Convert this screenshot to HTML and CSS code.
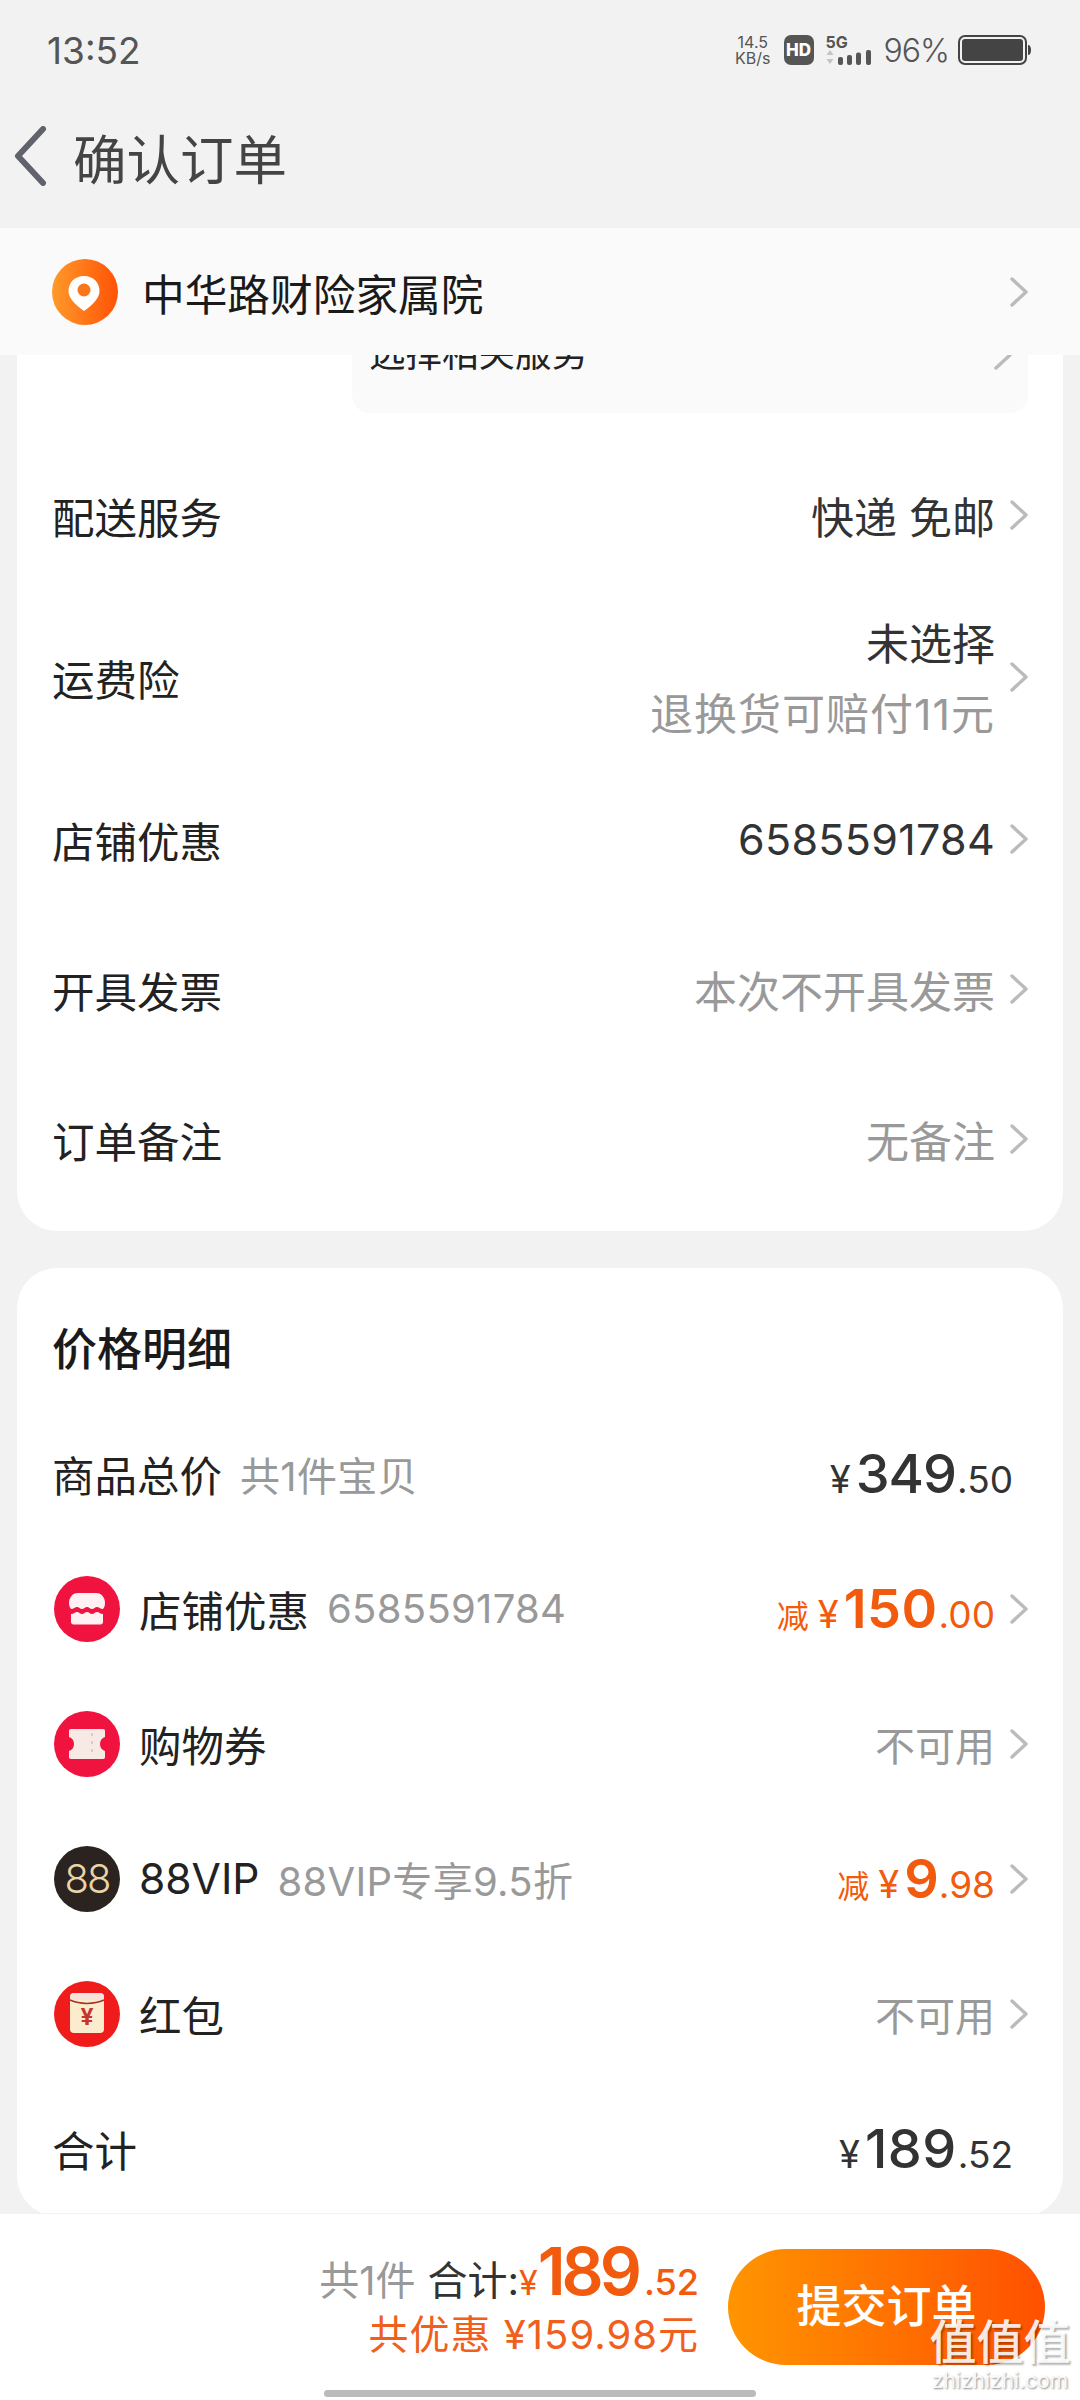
FILE: index.html
```html
<!DOCTYPE html>
<html lang="zh-CN">

<head>
    <meta charset="UTF-8">
    <meta name="viewport" content="width=device-width, initial-scale=1.0">
    <title>确认订单</title>
    <link rel="stylesheet" href="styles.css">
</head>

<body>
    <svg class="defs" width="0" height="0">
        <symbol id="chev" viewBox="0 0 18 30">
            <path d="M2 2l14 13L2 28" fill="none" stroke="#bbb" stroke-width="3.4" stroke-linecap="round" stroke-linejoin="round" />
        </symbol>
    </svg>

    <div class="page">
        <div class="status">
            <span class="time">13:52</span>
            <div class="status-right">
                <div class="speed"><span>14.5</span><span>KB/s</span></div>
                <span class="hd">HD</span>
                <div class="net">
                    <span class="net-label">5G</span>
                    <svg width="47" height="15" viewBox="0 0 47 15">
                        <path d="M4 0l3.500 5h-7zM4 14l3.500-5h-7z" fill="#c4c4c4" />
                        <rect x="12" y="7" width="5" height="8" rx="2" fill="#555" />
                        <rect x="21" y="5" width="5" height="10" rx="2" fill="#555" />
                        <rect x="30" y="2.500" width="5" height="12.500" rx="2" fill="#555" />
                        <rect x="40" y="0" width="5" height="15" rx="2" fill="#555" />
                    </svg>
                </div>
                <span class="pct">96%</span>
                <svg width="73" height="30" viewBox="0 0 73 30">
                    <rect x="1" y="1" width="67" height="28" rx="6" fill="none" stroke="#444" stroke-width="2" />
                    <rect x="4" y="4" width="61" height="22" rx="3" fill="#444" />
                    <path d="M70 10c2 0 3 2 3 5s-1 5-3 5z" fill="#444" />
                </svg>
            </div>
        </div>

        <div class="nav">
            <svg class="back" width="34" height="60" viewBox="0 0 34 60">
                <path d="M30 3L5 30l25 27" fill="none" stroke="#60636b" stroke-width="6" stroke-linecap="round" stroke-linejoin="round" />
            </svg>
            <span class="nav-title">确认订单</span>
        </div>

        <div class="address">
            <svg width="66" height="66" viewBox="0 0 66 66">
                <defs>
                    <linearGradient id="pinBg" x1="0" x2="1" y1="0" y2="0">
                        <stop offset="0" stop-color="#ff9a2a" />
                        <stop offset="1" stop-color="#ff5206" />
                    </linearGradient>
                </defs>
                <circle cx="33" cy="33" r="33" fill="url(#pinBg)" />
                <path d="M32 17c-9 0-15.500 6.500-15.500 15 0 7 6 13 15.500 20 9.500-7 15.500-13 15.500-20 0-8.500-6.500-15-15.500-15z" fill="#fff" />
                <circle cx="32" cy="31" r="6.500" fill="#f9761a" />
            </svg>
            <span class="address-name">中华路财险家属院</span>
            <svg class="chev"><use href="#chev" /></svg>
        </div>

        <div class="scroller">
            <div class="card card-top">
                <div class="service-box">
                    <span>选择相关服务</span>
                    <svg class="chev"><use href="#chev" /></svg>
                </div>

                <div class="row">
                    <span class="label">配送服务</span>
                    <div class="val"><span>快递 免邮</span><svg class="chev"><use href="#chev" /></svg></div>
                </div>
                <div class="row row-tall">
                    <span class="label">运费险</span>
                    <div class="val">
                        <div class="val-lines">
                            <span>未选择</span>
                            <span class="muted claim">退换货可赔付11元</span>
                        </div>
                        <svg class="chev"><use href="#chev" /></svg>
                    </div>
                </div>
                <div class="row">
                    <span class="label">店铺优惠</span>
                    <div class="val"><span class="code">6585591784</span><svg class="chev"><use href="#chev" /></svg></div>
                </div>
                <div class="row">
                    <span class="label">开具发票</span>
                    <div class="val muted"><span>本次不开具发票</span><svg class="chev"><use href="#chev" /></svg></div>
                </div>
                <div class="row">
                    <span class="label">订单备注</span>
                    <div class="val muted"><span>无备注</span><svg class="chev"><use href="#chev" /></svg></div>
                </div>
            </div>

            <div class="card card-price">
                <div class="price-title">价格明细</div>

                <div class="row row-price">
                    <div class="left">
                        <span class="label">商品总价</span>
                        <span class="note">共1件宝贝</span>
                    </div>
                    <div class="amount amount-plain">
                        <span class="yen">¥</span><span class="big">349</span><span class="cents">.50</span>
                    </div>
                </div>

                <div class="row row-price">
                    <div class="left">
                        <svg class="badge" viewBox="0 0 66 66">
                            <circle cx="33" cy="33" r="33" fill="#f0123f" />
                            <path d="M24 17h18c6 0 9 5 9 10 0 3-1 5-2 6-3 0-4-2-6-2-2 0-3 2-5 2s-3-2-5-2-3 2-5 2-3-2-5-2-3 2-6 2c-1-1-2-3-2-6 0-5 3-10 9-10z" fill="#fff" opacity=".94" />
                            <path d="M17 38c3 0 4-2 6-2s3 2 5 2 3-2 5-2 3 2 5 2 3-2 5-2 3 2 6 2v8c0 1.500-1 2.500-2.500 2.500h-27c-1.500 0-2.500-1-2.500-2.500z" fill="#fff" opacity=".94" />
                        </svg>
                        <span class="label">店铺优惠</span>
                        <span class="note">6585591784</span>
                    </div>
                    <div class="val">
                        <div class="amount amount-off">
                            <span class="off">减</span><span class="yen">¥</span><span class="big big-one">150</span><span class="cents">.00</span>
                        </div>
                        <svg class="chev"><use href="#chev" /></svg>
                    </div>
                </div>

                <div class="row row-price">
                    <div class="left">
                        <svg class="badge" viewBox="0 0 66 66">
                            <circle cx="33" cy="33" r="33" fill="#f0123f" />
                            <path d="M17 18h32c1.500 0 2 .8 2 2v6c-3 1-5 3.500-5 7s2 6 5 7v6c0 1.200-.5 2-2 2H17c-1.500 0-2-.8-2-2v-6c3-1 5-3.500 5-7s-2-6-5-7v-6c0-1.200.5-2 2-2z" fill="#f7e9e4" />
                            <path d="M38 22v22" stroke="#e4c9c2" stroke-width="2" stroke-dasharray="3 5" />
                        </svg>
                        <span class="label">购物券</span>
                    </div>
                    <div class="val muted val-small"><span>不可用</span><svg class="chev"><use href="#chev" /></svg></div>
                </div>

                <div class="row row-price">
                    <div class="left">
                        <span class="badge badge-vip">88</span>
                        <span class="label">88VIP</span>
                        <span class="note">88VIP专享9.5折</span>
                    </div>
                    <div class="val">
                        <div class="amount amount-off">
                            <span class="off">减</span><span class="yen">¥</span><span class="big">9</span><span class="cents">.98</span>
                        </div>
                        <svg class="chev"><use href="#chev" /></svg>
                    </div>
                </div>

                <div class="row row-price">
                    <div class="left">
                        <svg class="badge" viewBox="0 0 66 66">
                            <circle cx="33" cy="33" r="33" fill="#f01c1c" />
                            <rect x="16" y="12" width="34" height="40" rx="4" fill="#fbeccd" />
                            <path d="M16 16c0-2.500 1.500-4 4-4h26c2.500 0 4 1.500 4 4v3H16z" fill="#f8e3da" />
                            <path d="M16 19c10 4.500 24 4.500 34 0" fill="none" stroke="#a5322a" stroke-width="1.500" />
                            <text x="33" y="44" text-anchor="middle" class="packet-yen">¥</text>
                        </svg>
                        <span class="label">红包</span>
                    </div>
                    <div class="val muted val-small"><span>不可用</span><svg class="chev"><use href="#chev" /></svg></div>
                </div>

                <div class="row row-price">
                    <span class="label">合计</span>
                    <div class="amount amount-plain">
                        <span class="yen">¥</span><span class="big big-one">189</span><span class="cents">.52</span>
                    </div>
                </div>
            </div>
        </div>

        <div class="footer">
            <div class="footer-main">
                <div class="sum">
                    <div class="sum-line">
                        <span class="sum-count">共1件</span>
                        <span class="sum-label">合计:</span>
                        <span class="sum-yen">¥</span><span class="sum-big">189</span><span class="sum-cents">.52</span>
                    </div>
                    <div class="sum-save">共优惠 ¥159.98元</div>
                </div>
                <div class="submit">提交订单</div>
            </div>
            <div class="home-bar"></div>
        </div>

        <!-- site watermark sits over the button -->
        <div class="watermark">
            <div class="wm-big">值值值</div>
            <div class="wm-small">zhizhizhi.com</div>
        </div>
    </div>
</body>

</html>
```

FILE: styles.css
```css
* {
    margin: 0;
    padding: 0;
    box-sizing: border-box;
}

body {
    background-color: #f2f2f2;
    font-family: "Inter", "Noto Sans CJK SC", sans-serif;
    color: #222;
}

.defs {
    position: absolute;
}

.page {
    position: relative;
    width: 1080px;
    height: 2400px;
    display: flex;
    flex-direction: column;
    overflow: hidden;
}

/* status bar */
.status {
    height: 100px;
    flex-shrink: 0;
    display: flex;
    justify-content: space-between;
    align-items: center;
    padding: 0 49px 0 47px;
    color: #555;
}

.time {
    font-size: 37px;
}

.status-right {
    display: flex;
    align-items: center;
}

.speed {
    display: flex;
    flex-direction: column;
    align-items: center;
    font-size: 16px;
    line-height: 16px;
    margin-right: 13px;
}

.hd {
    width: 30px;
    height: 30px;
    border-radius: 7px;
    background-color: #555;
    color: #fff;
    font-size: 17px;
    font-weight: 800;
    line-height: 30px;
    text-align: center;
    margin-right: 12px;
}

.net {
    display: flex;
    flex-direction: column;
    margin-right: 11px;
}

.net-label {
    font-size: 16px;
    font-weight: 700;
    line-height: 15px;
}

.pct {
    font-size: 32px;
    font-weight: 300;
    letter-spacing: -1px;
    margin-right: 9px;
}

/* nav */
.nav {
    height: 128px;
    flex-shrink: 0;
    display: flex;
    align-items: center;
    padding: 0 0 16px 13px;
}

.nav-title {
    font-size: 53.500px;
    color: #444;
    margin-left: 26px;
}

.address {
    height: 127px;
    flex-shrink: 0;
    display: flex;
    align-items: center;
    padding: 0 52px;
    background-color: #fafafa;
}

.address-name {
    font-size: 42.700px;
    color: #1a1a1a;
    margin-left: 24px;
    flex: 1;
}

.chev {
    width: 18px;
    height: 30px;
    flex-shrink: 0;
}

/* content */
.scroller {
    flex: 1;
    min-height: 0;
    overflow: hidden;
    padding: 0 17px;
}

.card {
    background-color: #fff;
    border-radius: 40px;
    padding: 0 35px 17px 35px;
}

.card-top {
    border-radius: 0 0 40px 40px;
}

.service-box {
    margin: -40px 0 27px 300px;
    height: 98px;
    padding: 0 16px 0 17px;
    border-radius: 0 0 18px 18px;
    background-color: #fafafa;
    font-size: 36.500px;
    display: flex;
    justify-content: space-between;
    color: #222;
}

.service-box span {
    line-height: 78px;
}

.service-box .chev {
    margin-top: 25px;
}

.row {
    height: 150px;
    display: flex;
    justify-content: space-between;
    align-items: center;
}

.row-tall {
    height: 174px;
}

.label {
    font-size: 42.500px;
    color: #222;
}

.val {
    display: flex;
    align-items: center;
    font-size: 43px;
    color: #333;
}

.val .chev {
    margin-left: 15px;
}

.val-small {
    font-size: 40px;
}

.val-lines {
    display: flex;
    flex-direction: column;
    align-items: flex-end;
    gap: 15px;
    line-height: 55px;
    padding-top: 5px;
}

.claim {
    letter-spacing: 1px;
}

.code {
    letter-spacing: 0.3px;
}

.muted {
    color: #999;
}

.card-price {
    margin-top: 37px;
    padding-bottom: 0;
}

.price-title {
    height: 138px;
    padding-top: 50px;
    font-size: 45px;
    font-weight: 500;
    line-height: 64px;
    color: #1a1a1a;
}

.row-price {
    height: 135px;
}

.left {
    display: flex;
    align-items: center;
}

.badge {
    width: 66px;
    height: 66px;
    margin: 0 19px 0 2px;
    flex-shrink: 0;
}

.badge-vip {
    border-radius: 50%;
    background-color: #2a2320;
    color: #ecd3a8;
    font-size: 40px;
    font-weight: 300;
    letter-spacing: -2px;
    line-height: 66px;
    text-align: center;
}

.packet-yen {
    font-size: 23px;
    font-weight: 700;
    fill: #c8352a;
}

.note {
    font-size: 40px;
    letter-spacing: 0.3px;
    color: #999;
    margin-left: 18px;
}

.amount {
    display: flex;
    align-items: baseline;
}

.amount-plain {
    color: #333;
    margin-right: 15px;
}

.amount-off {
    color: #f25a0e;
}

.yen {
    font-size: 38px;
    margin-right: 5px;
}

.big {
    font-size: 54px;
    font-weight: 500;
    letter-spacing: -1px;
}

.big-one {
    letter-spacing: 0.5px;
}

.amount-off .big {
    font-weight: 600;
}

.cents {
    font-size: 37px;
    margin-left: 1px;
}

.off {
    font-size: 32px;
    margin-right: 9px;
}

/* footer */
.footer {
    height: 187px;
    flex-shrink: 0;
    background-color: #fff;
    border-top: 1px solid #f2f2f2;
    display: flex;
    flex-direction: column;
    align-items: center;
    position: relative;
}

.footer-main {
    align-self: stretch;
    display: flex;
    justify-content: flex-end;
    align-items: flex-start;
    padding: 35px 35px 0 0;
}

.sum {
    display: flex;
    flex-direction: column;
    align-items: flex-end;
    margin: -16px 29px 0 0;
}

.sum-line {
    display: flex;
    align-items: baseline;
    height: 76px;
}

.sum-count {
    font-size: 40px;
    color: #999;
    margin-right: 12px;
}

.sum-label {
    font-size: 40px;
    color: #333;
}

.sum-yen {
    font-size: 34px;
    color: #f25a0e;
}

.sum-big {
    font-size: 66px;
    font-weight: 600;
    letter-spacing: -4px;
    line-height: 76px;
    color: #f25a0e;
}

.sum-cents {
    font-size: 36px;
    font-weight: 500;
    color: #f25a0e;
    margin-left: 6px;
}

.sum-save {
    font-size: 40px;
    letter-spacing: 1px;
    line-height: 52px;
    color: #f0601c;
}

.submit {
    width: 317px;
    height: 116px;
    border-radius: 58px;
    background-image: linear-gradient(to right, #ff9500, #ff5000);
    color: #fff;
    font-size: 45px;
    font-weight: 500;
    line-height: 116px;
    text-align: center;
}

.home-bar {
    position: absolute;
    left: 324px;
    bottom: 3px;
    width: 432px;
    height: 7px;
    border-radius: 4px;
    background-color: #bbb;
}

.watermark {
    position: absolute;
    right: 9px;
    bottom: 6px;
    width: 142px;
    text-align: center;
    color: rgba(255, 255, 255, 0.9);
}

.wm-big {
    font-size: 47px;
    font-weight: 500;
    line-height: 52px;
    text-shadow: 2px 2px 2px rgba(0, 0, 0, 0.3);
}

.wm-small {
    font-size: 21px;
    line-height: 26px;
    text-shadow: 1px 1px 2px rgba(0, 0, 0, 0.45);
}
```
